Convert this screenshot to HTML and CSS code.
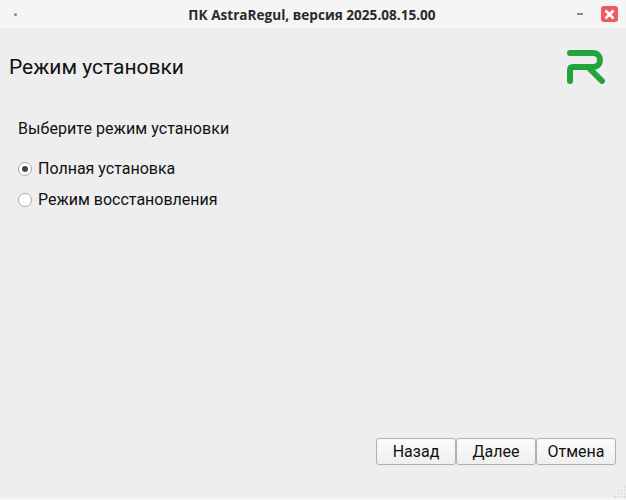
FILE: index.html
```html
<!DOCTYPE html>
<html>
<head>
  <title>ПК AstraRegul</title>
  <link rel="stylesheet" href="styles.css">
</head>
<body>
  <div class="window">
    <div class="titlebar">
      <span class="menu-dot"></span>
      <span class="title">ПК AstraRegul, версия 2025.08.15.00</span>
      <span class="minimize"></span>
      <span class="close">
        <svg width="11" height="11" viewBox="0 0 11 11"><path d="M1.5 1.5L9.5 9.5M9.5 1.5L1.5 9.5" stroke="#fff" stroke-width="2.6" fill="none"/></svg>
      </span>
    </div>
    <div class="header">
      <h1>Режим установки</h1>
      <svg class="logo" width="38" height="34" viewBox="0 0 38 34">
        <path d="M3 3H26C30.500 3 33 6 33 10C33 14 30.500 17 26 17H6C4 17 3 18 3 20V31M22 18L35 31" fill="none" stroke="#20a53a" stroke-width="6" stroke-linecap="round" stroke-linejoin="round"/>
      </svg>
    </div>
    <div class="content">
      <p class="question">Выберите режим установки</p>
      <label class="radio"><span class="mark checked"></span>Полная установка</label>
      <label class="radio"><span class="mark"></span>Режим восстановления</label>
    </div>
    <div class="buttons">
      <button>Назад</button>
      <button>Далее</button>
      <button>Отмена</button>
    </div>
    <div class="grip"></div>
  </div>
</body>
</html>
```

FILE: styles.css
```css
html, body {
  margin: 0;
  padding: 0;
}
body {
  font-family: 'Roboto', sans-serif;
  color: #111;
  background: #eeeeee;
}
.window {
  position: relative;
  box-sizing: border-box;
  width: 626px;
  height: 500px;
  border-bottom: 2px solid #f5f5f5;
  display: flex;
  flex-direction: column;
  overflow: hidden;
}
.titlebar {
  height: 28px;
  background: #f5f5f5;
  display: flex;
  align-items: center;
  position: relative;
}
.menu-dot {
  width: 3px;
  height: 3px;
  margin-left: 14px;
  border-radius: 50%;
  background: #888;
}
.title {
  position: absolute;
  left: 0;
  right: 2px;
  top: 6px;
  text-align: center;
  font-family: 'Open Sans', sans-serif;
  font-weight: 700;
  font-size: 13.600px;
  line-height: 17px;
  color: #2a2a2a;
}
.minimize {
  position: absolute;
  left: 577px;
  top: 13px;
  width: 6px;
  height: 2px;
  background: #888;
}
.close {
  position: absolute;
  left: 601px;
  top: 6px;
  width: 17px;
  height: 16px;
  border-radius: 3px;
  background: #ee5a60;
  display: flex;
  align-items: center;
  justify-content: center;
}
.header {
  display: flex;
  justify-content: space-between;
  padding: 22px 21px 0 9px;
}
h1 {
  margin: 5px 0 0;
  font-size: 21px;
  font-weight: 400;
  line-height: 24px;
}
.content {
  padding: 35px 18px 0;
  flex: 1;
}
.question {
  margin: 0 0 14px;
  font-size: 16px;
  line-height: 20px;
  letter-spacing: 0.06px;
}
.radio {
  display: flex;
  align-items: center;
  height: 31px;
  font-size: 16px;
}
.mark {
  box-sizing: border-box;
  width: 14px;
  height: 14px;
  margin-right: 6px;
  border: 1px solid #aaa;
  border-radius: 50%;
  background: #fff;
  display: flex;
  align-items: center;
  justify-content: center;
}
.mark.checked::after {
  content: "";
  width: 6px;
  height: 6px;
  border-radius: 50%;
  background: #444;
}
.buttons {
  display: flex;
  justify-content: flex-end;
  padding: 0 10px 33px 0;
}
button {
  box-sizing: border-box;
  width: 80px;
  height: 27px;
  padding: 0;
  border: 1px solid #b0b0b0;
  border-radius: 3px;
  background: linear-gradient(#fcfcfc, #efefef);
  font-family: 'Roboto', sans-serif;
  font-size: 16px;
  color: #111;
}
.grip {
  position: absolute;
  right: 1px;
  bottom: 1px;
  width: 11px;
  height: 11px;
  background-image: radial-gradient(#c4c4c4 0.7px, transparent 0.8px);
  background-size: 3px 3px;
  clip-path: polygon(100% 0, 100% 100%, 0 100%);
}
```
